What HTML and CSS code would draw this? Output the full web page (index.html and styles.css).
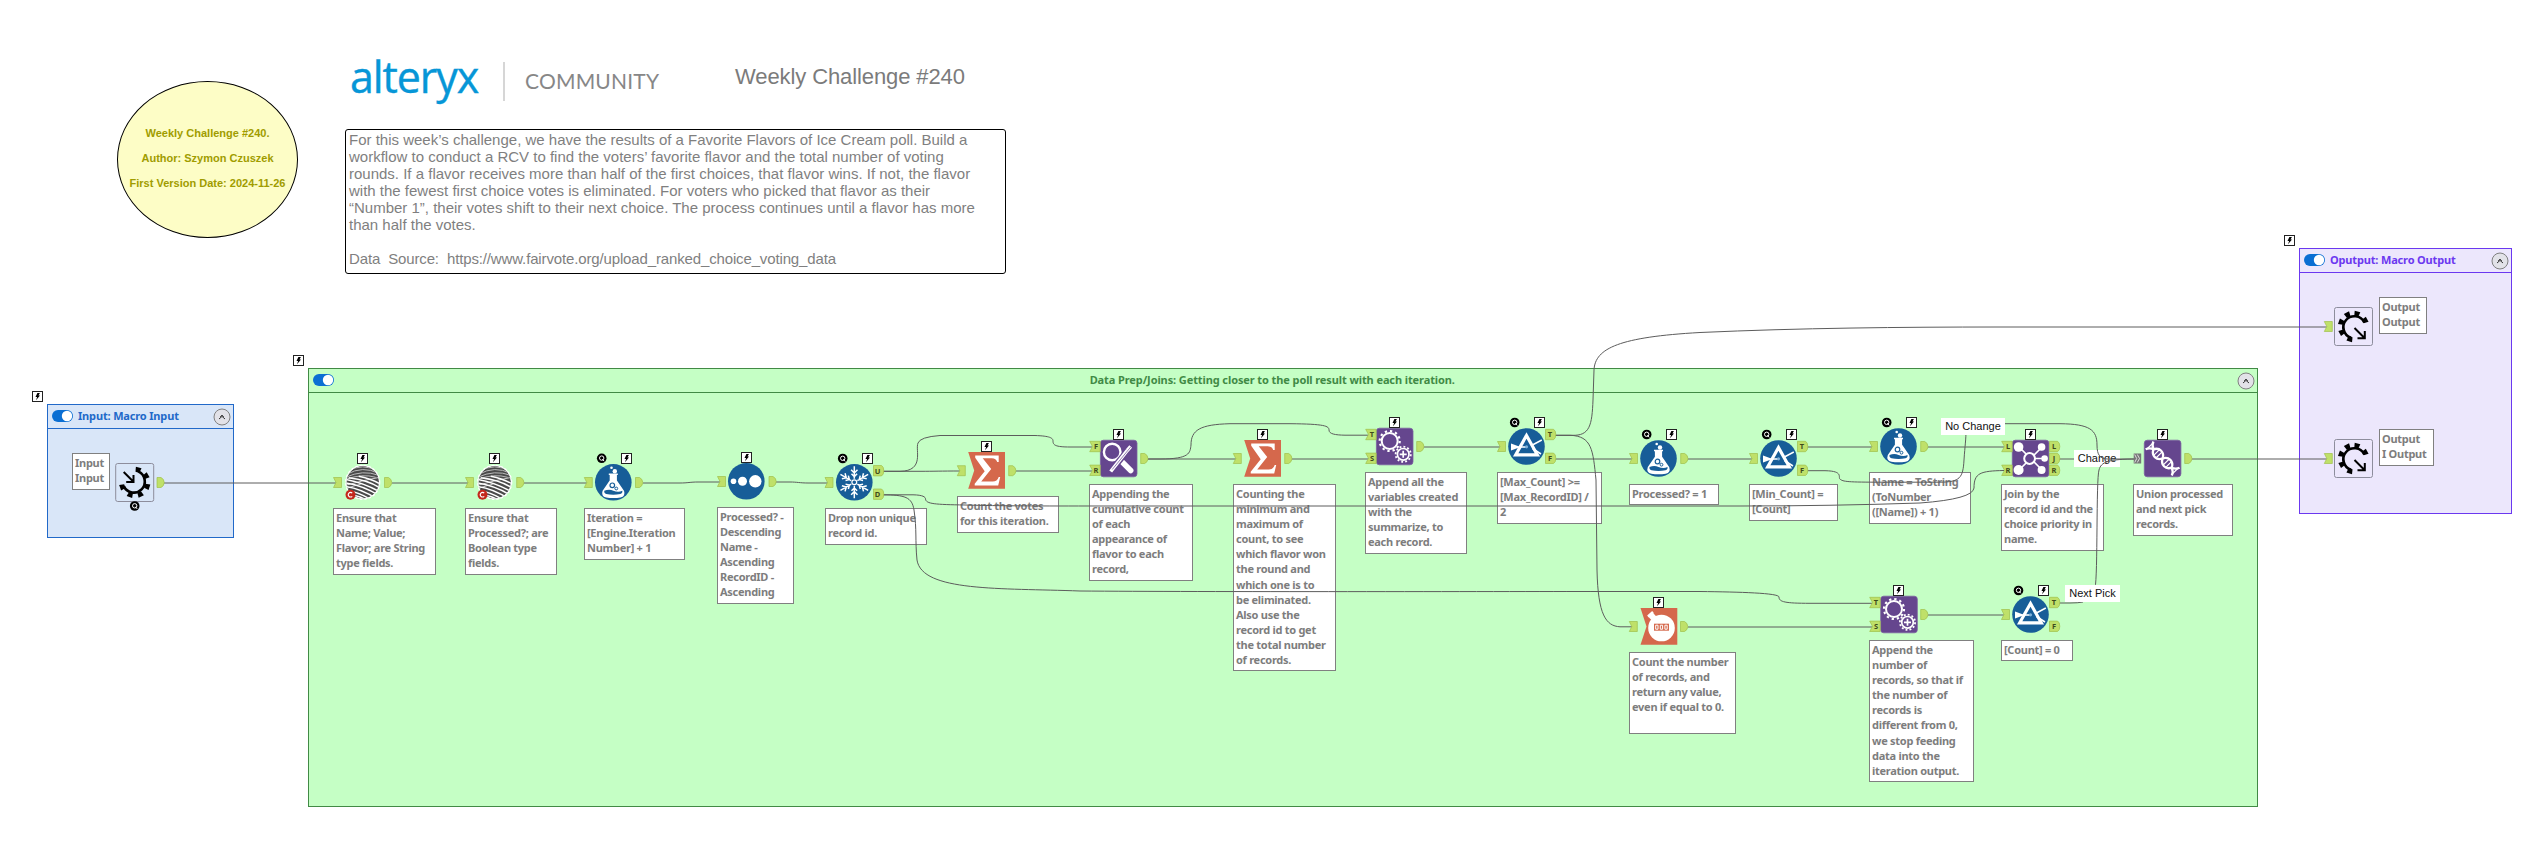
FILE: index.html
```html
<!DOCTYPE html>
<html lang="en">
<head>
<meta charset="utf-8">
<title>Weekly Challenge #240</title>
<link rel="stylesheet" href="styles.css">
</head>
<body>
<svg class="defs" width="0" height="0" aria-hidden="true">
  <defs>
    <g id="bolt">
      <rect x=".5" y=".5" width="10" height="10" fill="#fff" stroke="#222"/>
      <path d="M5.400 2H7.900L6.500 4.600H8L4 9.200L5.100 5.900H3.500Z" fill="#000"/>
    </g>
    <g id="q">
      <circle r="4.800" fill="#000"/>
      <circle r="2.200" cy="-.2" fill="none" stroke="#fff" stroke-width="1"/>
      <path d="M.6 .8L2.500 2.900" stroke="#fff" stroke-width="1"/>
    </g>
    <g id="in"><path d="M0 -5H8V5H0L2.5 0Z" fill="#bfe069" stroke="#9fc04a" stroke-width=".7"/></g>
    <g id="inl"><path d="M0 -5.2H10.5V5.2H0L2.8 0Z" fill="#bfe069" stroke="#9fc04a" stroke-width=".7"/></g>
    <g id="out"><path d="M0 -5H4Q7.2 -3.5 7.2 0Q7.2 3.5 4 5H0Z" fill="#bfe069" stroke="#9fc04a" stroke-width=".7"/></g>
    <g id="outl"><path d="M0 -5.2H8Q10.3 -4 10.3 0Q10.3 4 8 5.2H0Z" fill="#bfe069" stroke="#9fc04a" stroke-width=".7"/></g>
    <g id="multi"><rect y="-5" width="7.5" height="10" fill="#777"/><path d="M1 -4L3 0L1 4M3.6 -4L5.8 0L3.6 4" fill="none" stroke="#ddd" stroke-width="1"/></g>
    <g id="toggle"><rect width="21" height="12" rx="6" fill="#0b6fd3"/><circle cx="15" cy="6" r="5.2" fill="#fff"/></g>
    <g id="collapse">
      <circle r="8" fill="#e2e2e8" stroke="#808080"/>
      <path d="M-3 2L0 -.6L3 2M-1.800 -.2L0 -1.800L1.800 -.2" fill="none" stroke="#333" stroke-width="1"/>
    </g>
    <clipPath id="ball"><circle r="16.3"/></clipPath>
    <g id="wool">
      <circle r="17" fill="#fff" stroke="#fff" stroke-width="1.2" stroke-dasharray="2.5 2"/>
      <g clip-path="url(#ball)">
        <circle r="16.3" fill="#4a4a4a"/>
        <path d="M-16 -8Q0 -17 16 -9M-17 -5Q0 -13 16 -7M-17 -3Q0 -9 13 -5M-10 -14Q0 -17 10 -14" fill="none" stroke="#bbb" stroke-width="1"/>
        <path d="M-17 3Q0 -2 17 -5M-17 6.500Q-8 3 -2 2" fill="none" stroke="#ccc" stroke-width="1"/>
        <path d="M-18 -3Q0 0 18 10M-18 .5Q0 3 17 13.500M-18 4Q-2 6 15 17M-18 8Q-4 9 11 19M-17 12Q-6 12 6 19M-14 -4.500Q6 -2 18 6M-4 -6Q10 -3 18 2" fill="none" stroke="#fff" stroke-width="1.5"/>
      </g>
      <circle cx="-12.200" cy="12.400" r="5" fill="#c4281c"/>
      <path d="M-10.500 10.800A2.300 2.300 0 1 0 -10.500 14" fill="none" stroke="#fff" stroke-width="1.200"/>
    </g>
    <g id="disc"><circle r="18.3" fill="#175d98"/></g>
    <g id="formula">
      <use href="#disc"/>
      <circle cx="-1.800" cy="-14.500" r="1.300" fill="#fff"/>
      <circle cx="1.500" cy="-11" r="2.200" fill="#fff"/>
      <path d="M-4.500 -8H4.500M-2.800 -8V-1.500L-10 9Q-11.500 13.500 -7 14.500Q0 15.500 7 14.500Q11.500 13.500 10 9L2.800 -1.500V-8Z" fill="#fff" stroke="#fff" stroke-width="1.600" stroke-linejoin="round"/>
      <path d="M-9 8.500Q-4 6.500 0 8.500Q5 10.500 9 8.500Q9.500 11 7 11.800Q0 13 -7 11.800Q-9.500 11 -9 8.500Z" fill="#175d98"/>
      <circle cx="-1" cy="3" r="2.300" fill="#fff" stroke="#175d98" stroke-width="1.200"/>
      <circle cx="3" cy="6.200" r="1.400" fill="#fff" stroke="#175d98" stroke-width="1"/>
    </g>
    <g id="sort"><use href="#disc"/><circle cx="-12.800" r="2.800" fill="#fff"/><circle cx="-3.800" r="4.500" fill="#fff"/><circle cx="9" r="6.200" fill="#fff"/></g>
    <g id="arm" fill="none" stroke="#fff" stroke-width="1.500"><path d="M0 -3.500V-16M-3.200 -12.500L0 -9.300L3.200 -12.500M-2.800 -8.500L0 -5.700L2.800 -8.500"/></g>
    <g id="unique">
      <use href="#disc"/>
      <use href="#arm"/><use href="#arm" transform="rotate(60)"/><use href="#arm" transform="rotate(120)"/>
      <use href="#arm" transform="rotate(180)"/><use href="#arm" transform="rotate(240)"/><use href="#arm" transform="rotate(300)"/>
      <circle r="2.400" fill="none" stroke="#fff" stroke-width="1.200"/>
    </g>
    <g id="filter">
      <use href="#disc"/>
      <path d="M-15.500 -3V4L-6 .5Z" fill="#fff"/>
      <path d="M0 -11L10.800 8.300H-10.800Z" fill="none" stroke="#fff" stroke-width="3.200"/>
      <path d="M-8 .5H0M5 -1L15.300 -6.500M6 2L14.500 7.500" fill="none" stroke="#fff" stroke-width="1.500"/>
      <circle r="1.600" cy=".3" fill="#7fb0d8"/>
    </g>
    <g id="flag"><path d="M-18.500 -18.500H18.300V18.300H-18.500L-12.500 0Z" fill="#d5684c"/></g>
    <g id="sum">
      <use href="#flag"/>
      <path d="M-11.500 -15H12V-8.500H10.500Q9.500 -12.300 5 -12.300H-4L4.500 -1.500L-5.500 11H6Q10.500 11 12 6.500H13.500L11.500 15H-12V13.200L-2 .8L-11.500 -12.800Z" fill="#fff"/>
    </g>
    <g id="count">
      <use href="#flag"/>
      <circle cx="2.500" cy="1.500" r="13.300" fill="#fff"/>
      <path d="M-9 -8L-4.500 -12" stroke="#fff" stroke-width="7"/>
      <path d="M-11 -10L-6 -14.500" stroke="#fff" stroke-width="2.500"/>
      <rect x="-5" y="-2.800" width="15" height="7" fill="#d5684c"/>
      <path d="M-3.300 -1.300h2.300v4h-2.300zM1.300 -1.300h2.300v4h-2.300zM5.900 -1.300h2.300v4h-2.300z" fill="none" stroke="#fff" stroke-width="1"/>
    </g>
    <g id="tile"><rect x="-18.300" y="-18.300" width="36.600" height="36.600" rx="3" fill="#65468e" stroke="#7b60a0" stroke-width=".8"/></g>
    <g id="find">
      <use href="#tile"/>
      <path d="M0 0L12 12" stroke="#fff" stroke-width="5.500" stroke-linecap="round"/>
      <circle cx="-6.500" cy="-6.500" r="8.300" fill="#65468e" stroke="#fff" stroke-width="2.400"/>
      <path d="M-9.500 14.500L11.500 -11" stroke="#65468e" stroke-width="6"/>
      <path d="M-8 13L8.500 -8M8.500 -8L12 -12" stroke="#fff" stroke-width="3.600"/>
      <path d="M-6.500 11L12 -11.500" stroke="#65468e" stroke-width=".7"/>
    </g>
    <g id="append">
      <use href="#tile"/>
      <g fill="none" stroke="#fff">
        <circle cx="-5" cy="-5.500" r="8" stroke-width="2"/>
        <circle cx="-5" cy="-5.500" r="10" stroke-width="2.200" stroke-dasharray="2.300 2.930"/>
        <circle cx="8.500" cy="7.800" r="5.800" stroke-width="1.700"/>
        <circle cx="8.500" cy="7.800" r="7.600" stroke-width="1.800" stroke-dasharray="1.900 2.080"/>
        <path d="M5 7.800H12M8.500 4.300V11.300" stroke-width="1.700"/>
      </g>
    </g>
    <g id="join">
      <use href="#tile"/>
      <path d="M-11 -11L11 11M-11 11L11 -11M0 0H13" stroke="#fff" stroke-width="1.700"/>
      <circle r="5.400" cx="-1" fill="#65468e" stroke="#fff" stroke-width="2"/>
      <g fill="#fff"><circle cx="-12" cy="-11.500" r="4.800"/><circle cx="-12" cy="11.500" r="5"/><circle cx="11" cy="-11.500" r="3.800"/><circle cx="11" cy="11.500" r="4"/><circle cx="14" r="3.300"/></g>
    </g>
    <g id="union">
      <use href="#tile"/>
      <g fill="none" stroke="#fff" stroke-width="2.300" transform="rotate(45)">
        <path d="M-18.500 5.500Q-17 1.500 -13 0C-10 -6 -3 -6 0 0C3 6 10 6 13 0Q17 -1.500 18.500 -5.500"/>
        <path d="M-18.500 -5.500Q-17 -1.500 -13 0C-10 6 -3 6 0 0C3 -6 10 -6 13 0Q17 1.500 18.500 5.500"/>
        <path d="M-8.500 -4V4M-5 -4V4M5 -4V4M8.500 -4V4M-17.800 -4V4M17.800 -4V4" stroke-width="1.200"/>
      </g>
    </g>
    <g id="frame"><rect x="-19" y="-19" width="38" height="38" rx="2" fill="none" stroke="#8d8d9c"/></g>
    <g id="tooth"><path d="M-2 -10.500L-2.900 -15.500H2.900L2 -10.500Z" fill="#000"/></g>
    <g id="macroin">
      <use href="#frame"/>
      <path d="M3.900 -10.800A11 11 0 1 1 -10.800 3.900" fill="none" stroke="#000" stroke-width="2.600"/>
      <use href="#tooth" transform="rotate(15)"/><use href="#tooth" transform="rotate(60)"/><use href="#tooth" transform="rotate(108)"/>
      <use href="#tooth" transform="rotate(155)"/><use href="#tooth" transform="rotate(200)"/><use href="#tooth" transform="rotate(250)"/>
      <path d="M-11 -10.500L-1 -.5M-1.200 -7.500V-.5H-8.500" fill="none" stroke="#000" stroke-width="2"/>
    </g>
    <g id="macroout">
      <use href="#frame"/>
      <path d="M-2.500 11.200A11 11 0 1 1 10.800 -4" fill="none" stroke="#000" stroke-width="2.600"/>
      <use href="#tooth" transform="rotate(15)"/><use href="#tooth" transform="rotate(62)"/><use href="#tooth" transform="rotate(333)"/>
      <use href="#tooth" transform="rotate(290)"/><use href="#tooth" transform="rotate(243)"/><use href="#tooth" transform="rotate(196)"/>
      <path d="M1 1.500L11 11.500M11.300 4.500V11.800H4" fill="none" stroke="#000" stroke-width="2"/>
    </g>
  </defs>
</svg>

<main class="canvas">
  <div class="credit">
    <span>Weekly Challenge #240.</span>
    <span>Author: Szymon Czuszek</span>
    <span>First Version Date: 2024-11-26</span>
  </div>

  <header class="masthead">
    <span class="logo">alteryx</span>
    <span class="rule"></span>
    <span class="community">COMMUNITY</span>
    <h1 class="title">Weekly Challenge #240</h1>
  </header>

  <section class="brief">For this week’s challenge, we have the results of a Favorite Flavors of Ice Cream poll. Build a<br>workflow to conduct a RCV to find the voters’ favorite flavor and the total number of voting<br>rounds. If a flavor receives more than half of the first choices, that flavor wins. If not, the flavor<br>with the fewest first choice votes is eliminated. For voters who picked that flavor as their<br>“Number 1”, their votes shift to their next choice. The process continues until a flavor has more<br>than half the votes.<br><br><span class="source">Data&nbsp; Source:&nbsp; https://www.fairvote.org/upload_ranked_choice_voting_data</span></section>

  <section class="box box-in"><div class="bar"><svg class="tg" width="21" height="12"><use href="#toggle"/></svg><h2>Input: Macro Input</h2><svg class="cl" width="18" height="18" viewBox="-9 -9 18 18"><use href="#collapse"/></svg></div></section>
  <section class="box box-prep"><div class="bar"><svg class="tg" width="21" height="12"><use href="#toggle"/></svg><h2>Data Prep/Joins: Getting closer to the poll result with each iteration.</h2><svg class="cl" width="18" height="18" viewBox="-9 -9 18 18"><use href="#collapse"/></svg></div></section>
  <section class="box box-out"><div class="bar"><svg class="tg" width="21" height="12"><use href="#toggle"/></svg><h2>Oputput: Macro Output</h2><svg class="cl" width="18" height="18" viewBox="-9 -9 18 18"><use href="#collapse"/></svg></div></section>

  <p class="note n-input">Input<br>Input</p>
  <p class="note n-select1">Ensure that<br>Name; Value;<br>Flavor; are String<br>type fields.</p>
  <p class="note n-select2">Ensure that<br>Processed?; are<br>Boolean type<br>fields.</p>
  <p class="note n-iteration">Iteration =<br>[Engine.Iteration<br>Number] + 1</p>
  <p class="note n-sort">Processed? -<br>Descending<br>Name -<br>Ascending<br>RecordID -<br>Ascending</p>
  <p class="note n-unique">Drop non unique<br>record id.</p>
  <p class="note n-votes">Count the votes<br>for this iteration.</p>
  <p class="note n-find">Appending the<br>cumulative count<br>of each<br>appearance of<br>flavor to each<br>record,</p>
  <p class="note n-minmax">Counting the<br>minimum and<br>maximum of<br>count, to see<br>which flavor won<br>the round and<br>which one is to<br>be eliminated.<br>Also use the<br>record id to get<br>the total number<br>of records.</p>
  <p class="note n-append1">Append all the<br>variables created<br>with the<br>summarize, to<br>each record.</p>
  <p class="note n-max">[Max_Count] &gt;=<br>[Max_RecordID] /<br>2</p>
  <p class="note n-processed">Processed? = 1</p>
  <p class="note n-min">[Min_Count] =<br>[Count]</p>
  <p class="note n-name">Name = ToString<br>(ToNumber<br>([Name]) + 1)</p>
  <p class="note n-join">Join by the<br>record id and the<br>choice priority in<br>name.</p>
  <p class="note n-union">Union processed<br>and next pick<br>records.</p>
  <p class="note n-count">Count the number<br>of records, and<br>return any value,<br>even if equal to 0.</p>
  <p class="note n-append2">Append the<br>number of<br>records, so that if<br>the number of<br>records is<br>different from 0,<br>we stop feeding<br>data into the<br>iteration output.</p>
  <p class="note n-zero">[Count] = 0</p>
  <p class="note n-out1">Output<br>Output</p>
  <p class="note n-out2">Output<br>I Output</p>

  <span class="label l-change">Change</span>

  <svg class="flow" width="2542" height="851" viewBox="0 0 2542 851">
    <g class="wire">
      <path d="M164 483H336M392 483H469M524 483H587M643 483H680C688 483 690 482 698 482H720M776 482H790C797 482 800 483 808 483H829"/>
      <path d="M883 471.300H920C935 471.300 940 471 960 471M883 471.300H900C925 471 915 450 918 443Q920 437 940 435.500H1035C1050 436 1053 438 1053 441C1053 445 1055 447 1070 447H1092M1016 471H1092"/>
      <path d="M883 494.800H913C923 495 925.500 497 925.500 499C926 504 935 504.500 965 505C1000 506 1040 506 1100 506H1740C1800 506 1860 505 1920 503Q1973 499 1974 488C1974 473 1980 471 2004 470.500"/>
      <path d="M883 494.800C905 495 912 497 914 510C917 530 915 540 917 560C922 592 1000 588 1080 591C1200 592 1500 591.500 1600 591.500H1700C1740 592 1779 593 1779 597C1779 602 1785 603.300 1810 603.300H1873"/>
      <path d="M1148 459H1236M1148 459H1160C1190 459 1190 453 1191 445C1191 430 1200 424.500 1230 423.700H1290C1325 424 1329 426 1329 430C1329 434 1335 435 1345 435.200H1368"/>
      <path d="M1292 459H1369M1424 447H1500M1555 459H1632M1688 459H1752M1807 447H1872M1928 447H2004M2192 459H2328M1688 627H1873M1928 615H2004"/>
      <path d="M1555 435.300H1572C1590 436 1592 425 1593 400L1594 370C1595 348 1620 337 1700 332.500C1800 328 1900 327 2000 327H2328"/>
      <path d="M1555 435.300H1570C1592 436 1593 450 1596 480L1597 570C1598 615 1606 626 1620 626.800H1632"/>
      <path d="M1807 470.700H1825C1845 471 1837 478 1840.500 479.500C1844 482 1850 482.200 1890 482.200H1940C1960 482 1963 478 1964 460C1965 445 1966 440 1966 430"/>
      <path d="M2000 423.700H2060C2090 424 2097 430 2097 445C2097 455 2100 459 2108 459H2137M2059 459H2074M2059 603H2070Q2078 603 2083 602"/>
      <path d="M2095 588C2098 575 2096 480 2099 470C2101 462 2108 459 2137 459"/>
    </g>

    <g class="tools">
      <use href="#bolt" x="32" y="391"/><use href="#bolt" x="293" y="355"/><use href="#bolt" x="2284" y="235"/>

      <use href="#macroin" x="134.700" y="482.500"/><use href="#out" x="157" y="482.500"/><use href="#q" x="134.700" y="506"/>
      <use href="#wool" x="362.700" y="482.300"/><use href="#bolt" x="357" y="453"/><use href="#in" x="333.500" y="482.500"/><use href="#out" x="384.500" y="482.500"/>
      <use href="#wool" x="494.700" y="482.300"/><use href="#bolt" x="489" y="453"/><use href="#in" x="465.500" y="482.500"/><use href="#out" x="516.700" y="482.500"/>
      <use href="#formula" x="613.300" y="482.300"/><use href="#q" x="601.700" y="458.300"/><use href="#bolt" x="621" y="453"/><use href="#in" x="584.300" y="482.500"/><use href="#out" x="635.500" y="482.500"/>
      <use href="#sort" x="746.300" y="481.300"/><use href="#bolt" x="741" y="452"/><use href="#in" x="717.500" y="481.500"/><use href="#out" x="769" y="481.500"/>
      <use href="#unique" x="854.300" y="482.300"/><use href="#q" x="842.700" y="458.500"/><use href="#bolt" x="862" y="453"/><use href="#in" x="825" y="482.500"/><use href="#outl" x="873.500" y="470.700"/><use href="#outl" x="873.500" y="494.200"/>
      <use href="#sum" x="986.700" y="470.500"/><use href="#bolt" x="981" y="441"/><use href="#in" x="957.300" y="470.700"/><use href="#out" x="1008.700" y="470.700"/>
      <use href="#find" x="1118.700" y="458.500"/><use href="#bolt" x="1113" y="429"/><use href="#inl" x="1089.700" y="446.500"/><use href="#inl" x="1089.700" y="470.300"/><use href="#out" x="1140.700" y="458.500"/>
      <use href="#sum" x="1262.700" y="458.500"/><use href="#bolt" x="1257" y="429"/><use href="#in" x="1233.300" y="458.500"/><use href="#out" x="1284.700" y="458.500"/>
      <use href="#append" x="1394.700" y="446.500"/><use href="#bolt" x="1389" y="417"/><use href="#inl" x="1365.700" y="434.500"/><use href="#inl" x="1365.700" y="458.300"/><use href="#out" x="1416.700" y="446.500"/>
      <use href="#filter" x="1526.500" y="446.500"/><use href="#q" x="1514.700" y="422.500"/><use href="#bolt" x="1534" y="417"/><use href="#in" x="1497.500" y="446.500"/><use href="#outl" x="1545.500" y="434.500"/><use href="#outl" x="1545.500" y="458.300"/>
      <use href="#formula" x="1658.500" y="458.500"/><use href="#q" x="1646.700" y="434.500"/><use href="#bolt" x="1666" y="429"/><use href="#in" x="1629.500" y="458.500"/><use href="#out" x="1680.700" y="458.500"/>
      <use href="#filter" x="1778.500" y="458.500"/><use href="#q" x="1766.700" y="434.500"/><use href="#bolt" x="1786" y="429"/><use href="#in" x="1749.500" y="458.500"/><use href="#outl" x="1797.500" y="446.500"/><use href="#outl" x="1797.500" y="470.300"/>
      <use href="#formula" x="1898.500" y="446.500"/><use href="#q" x="1886.700" y="422.500"/><use href="#bolt" x="1906" y="417"/><use href="#in" x="1869.500" y="446.500"/><use href="#out" x="1920.700" y="446.500"/>
      <use href="#join" x="2030.600" y="458.500"/><use href="#bolt" x="2025" y="429"/><use href="#inl" x="2001.700" y="446.500"/><use href="#inl" x="2001.700" y="470.300"/><use href="#outl" x="2049.500" y="446.500"/><use href="#outl" x="2049.500" y="458.500"/><use href="#outl" x="2049.500" y="470.300"/>
      <use href="#union" x="2162.600" y="458.500"/><use href="#bolt" x="2157" y="429"/><use href="#multi" x="2133.700" y="458.500"/><use href="#out" x="2184.700" y="458.500"/>
      <use href="#count" x="1659" y="626.500"/><use href="#bolt" x="1653" y="597"/><use href="#in" x="1629.300" y="626.500"/><use href="#out" x="1680.500" y="626.500"/>
      <use href="#append" x="1899" y="614.500"/><use href="#bolt" x="1893" y="585"/><use href="#inl" x="1869.700" y="602.500"/><use href="#inl" x="1869.700" y="626.300"/><use href="#out" x="1920.700" y="614.500"/>
      <use href="#filter" x="2030.500" y="614.500"/><use href="#q" x="2018.500" y="590.500"/><use href="#bolt" x="2038" y="585"/><use href="#in" x="2001.500" y="614.500"/><use href="#outl" x="2049.500" y="602.500"/><use href="#outl" x="2049.500" y="626.300"/>
      <use href="#macroout" x="2353.500" y="326.500"/><use href="#in" x="2324.300" y="326.500"/>
      <use href="#macroout" x="2353.500" y="458.500"/><use href="#in" x="2324.300" y="458.500"/>
    </g>

    <g class="port">
      <text x="877.500" y="473.500">U</text><text x="877.500" y="497">D</text>
      <text x="1096" y="449.300">F</text><text x="1096" y="473">R</text>
      <text x="1372" y="437.300">T</text><text x="1372" y="461">S</text>
      <text x="1550" y="437.300">T</text><text x="1550" y="461">F</text>
      <text x="1802" y="449.300">T</text><text x="1802" y="473">F</text>
      <text x="2008" y="449.300">L</text><text x="2008" y="473">R</text>
      <text x="2054" y="449.300">L</text><text x="2054" y="461.300">J</text><text x="2054" y="473">R</text>
      <text x="1876" y="605.300">T</text><text x="1876" y="629">S</text>
      <text x="2054" y="605.300">T</text><text x="2054" y="629">F</text>
    </g>
  </svg>

  <span class="label l-nochange">No Change</span>
  <span class="label l-nextpick">Next Pick</span>
</main>
</body>
</html>
```
FILE: styles.css
```css
* { box-sizing: border-box; }
body { margin: 0; background: #fff; font-family: "Noto Sans", "Open Sans", sans-serif; }
h1, h2, p { margin: 0; }
.defs { position: absolute; }

/* free workflow canvas */
.canvas { position: relative; width: 2542px; height: 851px; overflow: hidden; }

.credit {
  position: absolute; left: 117px; top: 81px; width: 181px; height: 157px;
  display: flex; flex-direction: column; align-items: center; padding-top: 38.500px;
  border: 1px solid #000; border-radius: 50%; background: #fdfdc6;
  color: #a09c00; font: bold 11px/25px "Liberation Sans", Arial, sans-serif; white-space: nowrap;
}

.masthead {
  position: absolute; left: 350px; top: 56px; height: 50px;
  display: flex; align-items: center; white-space: nowrap;
}
.logo { width: 153px; color: #0696d7; font: 400 43px/50px "Open Sans", "Noto Sans", sans-serif; letter-spacing: -1.100px; -webkit-text-stroke: .4px #0696d7; transform: translateY(-4px); }
.rule { width: 2px; height: 39px; background: #d6d6d6; }
.community { margin-left: 20px; width: 210px; color: #878787; font: 21px/50px Lato, sans-serif; letter-spacing: .2px; }
.title { color: #7b7b7b; font: 22px/50px "Liberation Sans", Arial, sans-serif; letter-spacing: -.1px; transform: translateY(-4px); }

.brief {
  position: absolute; left: 345px; top: 129px; width: 661px; height: 145px; padding: .5px 3px;
  border: 1px solid #000; border-radius: 3px; background: #fff;
  color: #7f7f7f; font: 15px/17px "Liberation Sans", Arial, sans-serif; white-space: nowrap;
}
.source { letter-spacing: -.14px; }

.box { position: absolute; border: 1px solid var(--line); background: var(--fill); }
.bar { display: flex; align-items: center; height: 24px; padding: 0 2.500px 0 4px; border-bottom: 1px solid var(--line); }
.bar h2 { flex: 1; margin-left: 5px; color: var(--line); font-size: 11px; line-height: 22px; padding-bottom: 1px; font-weight: 700; letter-spacing: -.16px; white-space: nowrap; }
.bar .cl { flex: none; }
.bar .tg { flex: none; margin-bottom: 1px; }
.box-in { --line: #2169c9; --fill: #d9e6f8; left: 47px; top: 404px; width: 187px; height: 134px; }
.box-prep { --line: #418a45; --fill: #c5ffc5; left: 308px; top: 368px; width: 1950px; height: 439px; }
.box-prep h2 { margin-left: 0; padding-right: 26px; text-align: center; letter-spacing: -.1px; }
.box-out { --line: #6b38f0; --fill: #ece7fc; left: 2299px; top: 248px; width: 213px; height: 266px; }

.note {
  position: absolute; padding: 1px 2px; border: 1px solid #808080; background: #fff;
  color: #7d7d7d; font-size: 11px; font-weight: 700; line-height: 15.100px; letter-spacing: -.27px; white-space: nowrap;
}
.n-input { left: 72px; top: 453px; width: 38px; height: 37px; }
.n-select1 { left: 333px; top: 508px; width: 103px; height: 67px; }
.n-select2 { left: 465px; top: 508px; width: 92px; height: 67px; }
.n-iteration { left: 584px; top: 508px; width: 101px; height: 52px; }
.n-sort { left: 717px; top: 507px; width: 77px; height: 97px; }
.n-unique { left: 825px; top: 508px; width: 102px; height: 37px; }
.n-votes { left: 957px; top: 496px; width: 102px; height: 37px; }
.n-find { left: 1089px; top: 484px; width: 104px; height: 97px; }
.n-minmax { left: 1233px; top: 484px; width: 103px; height: 187px; }
.n-append1 { left: 1365px; top: 472px; width: 102px; height: 82px; }
.n-max { left: 1497px; top: 472px; width: 105px; height: 52px; }
.n-processed { left: 1629px; top: 484px; width: 90px; height: 21px; }
.n-min { left: 1749px; top: 484px; width: 89px; height: 37px; }
.n-name { left: 1869px; top: 472px; width: 102px; height: 52px; }
.n-join { left: 2001px; top: 484px; width: 103px; height: 67px; }
.n-union { left: 2133px; top: 484px; width: 100px; height: 52px; }
.n-count { left: 1629px; top: 652px; width: 107px; height: 82px; }
.n-append2 { left: 1869px; top: 640px; width: 105px; height: 142px; }
.n-zero { left: 2001px; top: 640px; width: 72px; height: 21px; }
.n-out1 { left: 2379px; top: 297px; width: 48px; height: 37px; }
.n-out2 { left: 2379px; top: 429px; width: 55px; height: 37px; }

.flow { position: absolute; left: 0; top: 0; }
.wire path { fill: none; stroke: #5c5c5c; stroke-width: 1; }
.port text { fill: #3d4a1c; font: bold 7.500px "Noto Sans", sans-serif; text-anchor: middle; }

.label {
  position: absolute; display: flex; justify-content: center; align-items: center; height: 17px;
  background: #fff; color: #111; font: 11px/17px "Liberation Sans", Arial, sans-serif; white-space: nowrap;
}
.l-nochange { left: 1941px; top: 418px; width: 64px; }
.l-change { left: 2074px; top: 450px; width: 46px; }
.l-nextpick { left: 2065px; top: 585px; width: 55px; }
```
